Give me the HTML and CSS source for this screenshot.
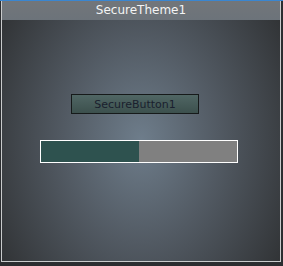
FILE: index.html
```html
<!DOCTYPE html>
<html lang="en">
<head>
    <meta charset="UTF-8">
    <title>SecureTheme1</title>
    <link rel="stylesheet" href="styles.css">
</head>
<body>
    <div class="form">
        <div class="titlebar">SecureTheme1</div>
        <div class="client">
            <button class="secure-btn">SecureButton1</button>
            <div class="progress">
                <div class="progress-fill" style="width: 50%;"></div>
            </div>
        </div>
    </div>
</body>
</html>
```
FILE: styles.css
```css
html, body {
    margin: 0;
    height: 100%;
}

body {
    background-color: #2b2d30;
    border-top: 1px solid #3a86d0;
    box-sizing: border-box;
    font-family: 'DejaVu Sans', Verdana, sans-serif;
}

.form {
    width: 280px;
    height: 261px;
    margin-left: 1px;
    box-sizing: border-box;
    border-left: 1px solid #c9cbcc;
    border-right: 1px solid #c9cbcc;
    border-bottom: 1px solid #c9cbcc;
    display: flex;
    flex-direction: column;
}

.titlebar {
    height: 19px;
    line-height: 18px;
    text-align: center;
    color: #f4f4f4;
    font-size: 12px;
    background: linear-gradient(to bottom, #72767a, #6c737a);
}

.client {
    flex: 1;
    background: radial-gradient(ellipse 62% 95% at 50% 50%, #6e7d8b 0%, #525a63 45%, #2f3133 100%);
    display: flex;
    flex-direction: column;
    align-items: flex-start;
    padding: 74px 0 0 38px;
}

.secure-btn {
    width: 128px;
    height: 20px;
    margin-left: 31px;
    padding: 0;
    border: 1px solid #161a1a;
    background: linear-gradient(to bottom, #506664, #3c504d);
    color: #1a1f2e;
    font-family: 'DejaVu Sans', Verdana, sans-serif;
    font-size: 11px;
}

.progress {
    width: 198px;
    height: 23px;
    margin-top: 26px;
    box-sizing: border-box;
    border: 1px solid #ffffff;
    background-color: #808080;
}

.progress-fill {
    height: 100%;
    background-color: #2e524f;
}
```
